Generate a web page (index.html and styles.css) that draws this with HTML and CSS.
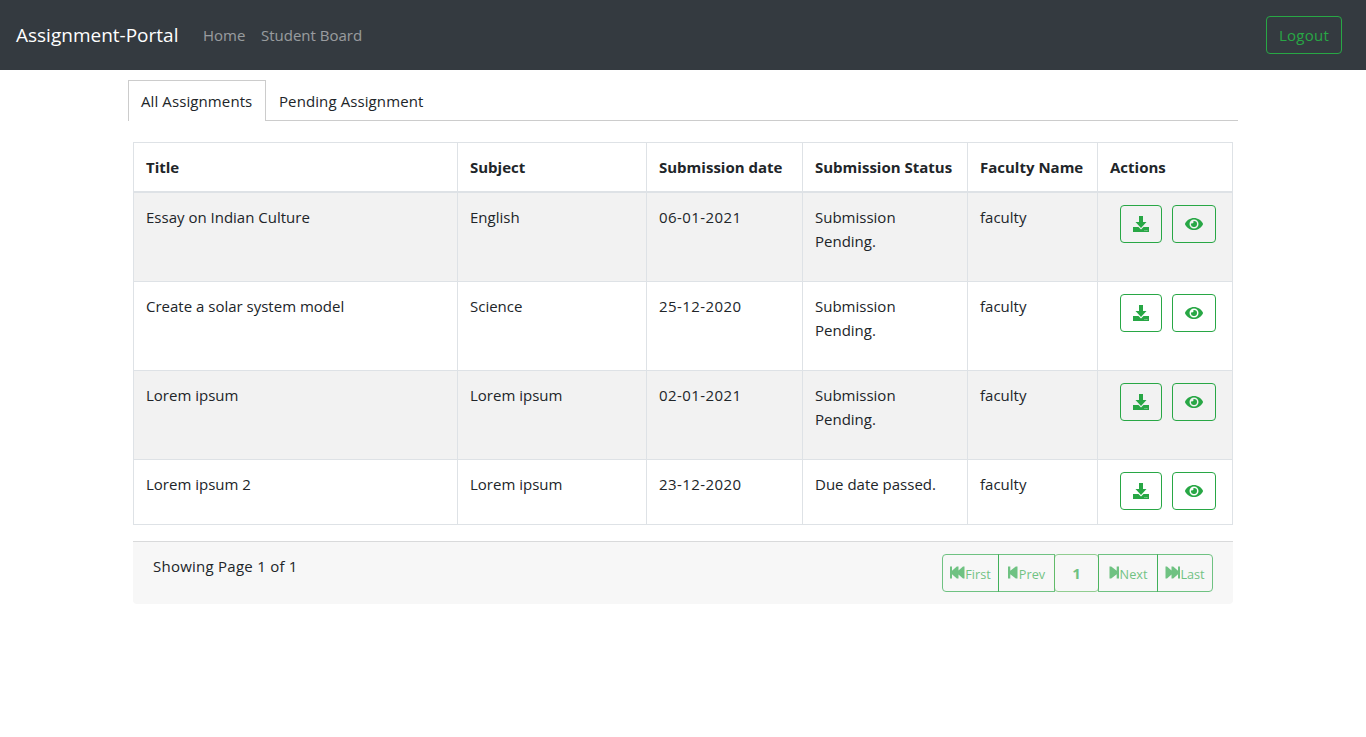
FILE: index.html
```html
<!DOCTYPE html>
<html lang="en">
<head>
<meta charset="utf-8">
<title>Assignment-Portal</title>
<link rel="stylesheet" href="styles.css">
</head>
<body>
<svg class="defs" aria-hidden="true">
<symbol id="download" viewBox="0 0 16 16"><path d="M6 0h4v6h3.500L8 12 2.500 6H6zM0 11h5.500L8 13.500 10.500 11H16v5H0zm11.600 2.900v.8h.8v-.8zm1.900 0v.8h.8v-.8z"/></symbol>
<symbol id="eye" viewBox="0 0 576 512"><path d="M572.520 241.400C518.290 135.590 410.930 64 288 64S57.680 135.640 3.480 241.410a32.350 32.350 0 0 0 0 29.190C57.710 376.410 165.070 448 288 448s230.320-71.640 284.520-177.410a32.350 32.350 0 0 0 0-29.190zM288 400a144 144 0 1 1 144-144 143.930 143.930 0 0 1-144 144zm0-240a95.310 95.310 0 0 0-25.310 3.790 47.850 47.850 0 0 1-66.900 66.900A95.780 95.780 0 1 0 288 160z"/></symbol>
<symbol id="step" viewBox="0 0 10 13"><path d="M0 .5h2.300v4.300L7.800.5H9.500v12H7.800L2.300 8.200v4.300H0z"/></symbol>
<symbol id="fast" viewBox="0 0 15 13"><path d="M0 .5h2v4.300L6.800.5H8.500v4L13 .5h1.500v12H13l-4.500-4v4H6.800L2 8.200v4.300H0z"/></symbol>
</svg>
<nav class="navbar">
  <a class="brand">Assignment-Portal</a>
  <a class="nav-link home">Home</a>
  <a class="nav-link board">Student Board</a>
  <button class="btn logout"><span>Logout</span></button>
</nav>
<main class="container">
  <div class="tabs"><div class="tab active"><span>All Assignments</span></div><div class="tab"><span>Pending Assignment</span></div></div>
  <table class="table">
    <colgroup><col class="c1"><col class="c2"><col class="c3"><col class="c4"><col class="c5"><col class="c6"></colgroup>
    <thead><tr><th>Title</th><th>Subject</th><th>Submission date</th><th>Submission Status</th><th>Faculty Name</th><th>Actions</th></tr></thead>
    <tbody>
    <tr class="tall"><td>Essay on Indian Culture</td><td>English</td><td class="date">06-01-2021</td><td>Submission<br>Pending.</td><td>faculty</td><td><div class="actions"><button class="btn"><svg class="i-down"><use href="#download"/></svg></button><button class="btn"><svg class="i-eye"><use href="#eye"/></svg></button></div></td></tr>
    <tr class="tall"><td>Create a solar system model</td><td>Science</td><td class="date">25-12-2020</td><td>Submission<br>Pending.</td><td>faculty</td><td><div class="actions"><button class="btn"><svg class="i-down"><use href="#download"/></svg></button><button class="btn"><svg class="i-eye"><use href="#eye"/></svg></button></div></td></tr>
    <tr class="tall"><td>Lorem ipsum</td><td>Lorem ipsum</td><td class="date">02-01-2021</td><td>Submission<br>Pending.</td><td>faculty</td><td><div class="actions"><button class="btn"><svg class="i-down"><use href="#download"/></svg></button><button class="btn"><svg class="i-eye"><use href="#eye"/></svg></button></div></td></tr>
    <tr class="short"><td>Lorem ipsum 2</td><td>Lorem ipsum</td><td class="date">23-12-2020</td><td>Due date passed.</td><td>faculty</td><td><div class="actions"><button class="btn"><svg class="i-down"><use href="#download"/></svg></button><button class="btn"><svg class="i-eye"><use href="#eye"/></svg></button></div></td></tr>
    </tbody>
  </table>
  <div class="footer">
    <span class="showing">Showing Page 1 of 1</span>
    <div class="pager">
      <button class="page first"><svg class="i-fast"><use href="#fast"/></svg><span>First</span></button>
      <button class="page prev"><svg class="i-step"><use href="#step"/></svg><span>Prev</span></button>
      <button class="page current">1</button>
      <button class="page next"><svg class="i-step flip"><use href="#step"/></svg><span>Next</span></button>
      <button class="page last"><svg class="i-fast flip"><use href="#fast"/></svg><span>Last</span></button>
    </div>
  </div>
</main>
</body>
</html>
```
FILE: styles.css
```css
* { box-sizing: border-box; }
body { margin: 0; background: #fff; color: #212529; font: 15px/24px "Open Sans", "Noto Sans", sans-serif; }
.defs { display: none; }
.navbar { display: flex; align-items: center; height: 70px; padding: 0 24px 0 16px; background: #343a40; }
.brand { width: 187px; color: #fff; font-size: 19px; line-height: 30px; white-space: nowrap; }
.nav-link { color: rgba(255, 255, 255, .5); white-space: nowrap; }
.home { width: 58px; }
.btn { display: flex; align-items: center; justify-content: center; height: 38px; padding: 0 12px; border: 1px solid #28a745; border-radius: 4px; background: transparent; color: #28a745; font: inherit; }
.logout { width: 76px; margin-left: auto; letter-spacing: .25px; }
.container { width: 1110px; margin: 10px auto 0; }
.tabs { display: flex; height: 41px; border-bottom: 1px solid #ccc; }
.tab { height: 41px; padding: 8px 12px 0; letter-spacing: .1px; white-space: nowrap; border: 1px solid transparent; border-bottom: 0; }
.tab.active { width: 138px; border-color: #ccc; background: #fff; }
.table { width: 1100px; margin: 21px 5px 16px; table-layout: fixed; border-collapse: collapse; }
.c1 { width: 324px; }
.c2 { width: 189px; }
.c3 { width: 156px; }
.c4 { width: 165px; }
.c5 { width: 130px; }
.c6 { width: 135px; }
th, td { padding: 12px; border: 1px solid #dee2e6; text-align: left; vertical-align: top; white-space: nowrap; }
th { border-bottom-width: 2px; font-weight: 700; }
.date { letter-spacing: .42px; }
.tall { height: 89px; }
.short { height: 65px; }
tbody tr:nth-child(odd) { background: #f2f2f2; }
.actions { display: flex; gap: 10px; height: 40px; margin-left: 10px; }
svg { fill: currentColor; flex: none; }
.i-down { width: 16px; height: 16px; }
.i-eye { width: 18px; height: 16px; }
.footer { display: flex; justify-content: space-between; width: 1100px; height: 63px; margin-left: 5px; padding: 12px 20px; border-top: 1px solid #d9dadb; border-radius: 0 0 4px 4px; background: #f7f7f7; }
.showing { letter-spacing: .25px; }
.pager { display: flex; height: 38px; }
.page { display: flex; align-items: center; justify-content: center; height: 38px; margin-left: -1px; padding: 0; border: 1px solid #28a745; background: transparent; color: #28a745; font: 12.7px/20px "Open Sans", sans-serif; opacity: .65; }
.page span { padding-top: 2px; }
.first { width: 57px; border-radius: 4px 0 0 4px; }
.prev { width: 57px; }
.current { width: 45px; border-color: #5cb85c; border-radius: 4px; font-size: 15px; font-weight: 700; }
.next { width: 60px; }
.last { width: 56px; border-radius: 0 4px 4px 0; }
.prev, .next { gap: 1px; }
.i-step { width: 10px; height: 13px; }
.i-fast { width: 15px; height: 13px; }
.flip { transform: scaleX(-1); }
```
